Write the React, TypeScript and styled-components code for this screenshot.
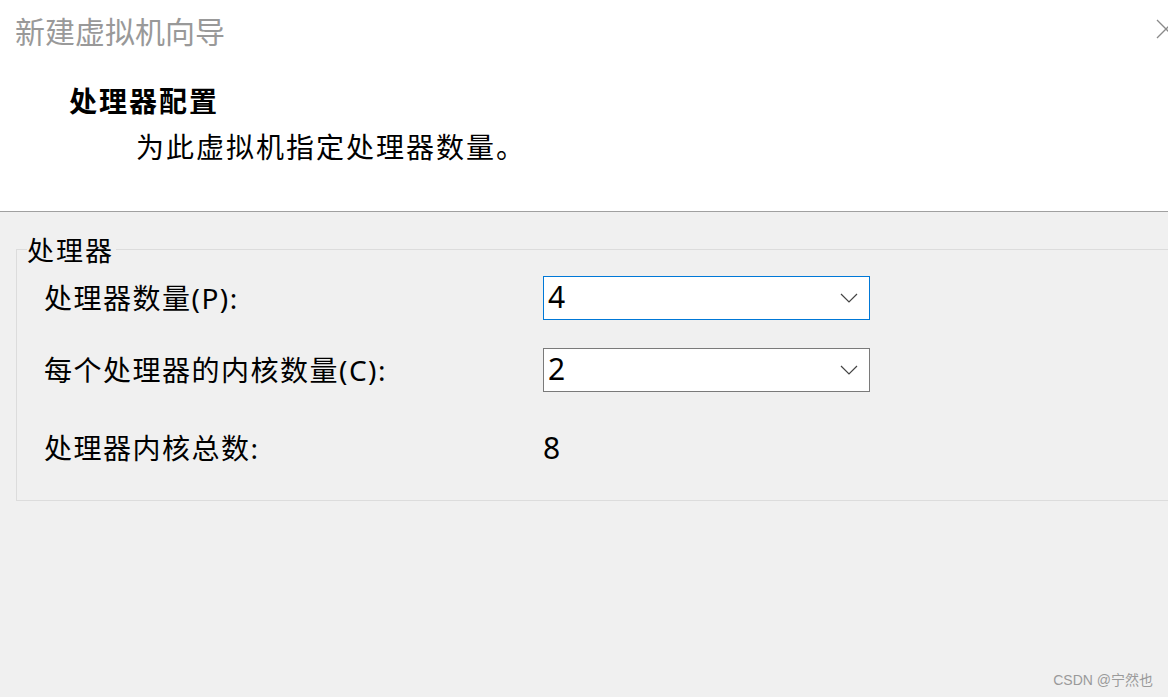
import styled, { createGlobalStyle } from 'styled-components';

const GlobalStyle = createGlobalStyle`
  html, body {
    margin: 0;
    padding: 0;
    background: #f0f0f0;
    overflow: hidden;
  }
  body {
    font-family: "Noto Sans", "Noto Sans CJK SC", sans-serif;
  }
`;

const Window = styled.div`
  width: 1168px;
  height: 697px;
  display: flex;
  flex-direction: column;
  background: #f0f0f0;
  overflow: hidden;
  position: relative;
`;

const Header = styled.div`
  height: 212px;
  box-sizing: border-box;
  background: #ffffff;
  border-bottom: 1px solid #a0a0a0;
  display: flex;
  flex-direction: column;
`;

const TitleBar = styled.div`
  display: flex;
  justify-content: space-between;
  align-items: center;
  height: 60px;
  padding-left: 15px;
`;

const Title = styled.div`
  font-family: "Noto Sans CJK SC", sans-serif;
  font-size: 30px;
  color: #999999;
  line-height: 1;
  margin-top: -1px;
`;

const CloseIcon = styled.svg`
  width: 20px;
  height: 20px;
  margin-right: -8px;
  margin-top: -2px;
`;

const Heading = styled.div`
  font-family: "Noto Sans CJK SC", sans-serif;
  font-size: 28px;
  letter-spacing: 2px;
  font-weight: 700;
  color: #000;
  margin: 26px 0 0 69px;
  line-height: 1;
`;

const Subheading = styled.div`
  font-family: "Noto Sans CJK SC", sans-serif;
  font-size: 28px;
  letter-spacing: 2px;
  color: #000;
  margin: 18px 0 0 136px;
  line-height: 1;
`;

const Body = styled.div`
  padding: 24px 0 0 16px;
`;

const Group = styled.fieldset`
  margin: 0;
  width: 1200px;
  box-sizing: border-box;
  border: 1px solid #dcdcdc;
  padding: 13px 0 37px 27px;
  min-width: 0;
`;

const Legend = styled.legend`
  font-family: "Noto Sans CJK SC", sans-serif;
  font-size: 27px;
  letter-spacing: 2px;
  color: #000;
  padding: 0 2px 0 0;
  margin-left: -17px;
  line-height: 1;
`;

const Rows = styled.div`
  display: grid;
  grid-template-columns: 499px 327px;
  row-gap: 28px;
  align-items: center;
`;

const Label = styled.div<{ $offset?: number }>`
  font-family: "Noto Sans", "Noto Sans CJK SC", sans-serif;
  font-size: 28px;
  letter-spacing: 1.5px;
  color: #000;
  line-height: 1;
  margin-top: ${(p) => p.$offset ?? 0}px;
`;

const SelectBox = styled.div<{ $focused?: boolean }>`
  height: 44px;
  box-sizing: border-box;
  background: #fff;
  border: 1px solid ${(p) => (p.$focused ? '#0078d7' : '#7a7a7a')};
  display: flex;
  align-items: center;
  justify-content: space-between;
  padding: 0 11px 0 4px;
`;

const Value = styled.span<{ $offset?: number }>`
  font-family: "Noto Sans", sans-serif;
  font-size: 30px;
  color: #000;
  line-height: 1;
  margin-top: ${(p) => p.$offset ?? -2}px;
`;

const Chevron = styled.svg`
  width: 18px;
  height: 10px;
`;

const Watermark = styled.div`
  position: absolute;
  right: 15px;
  bottom: 8px;
  font-family: "Liberation Sans", "Noto Sans CJK SC", sans-serif;
  font-size: 14px;
  color: #9a9a9a;
`;

const Select = ({ value, focused }: { value: string; focused?: boolean }) => (
  <SelectBox $focused={focused}>
    <Value>{value}</Value>
    <Chevron viewBox="0 0 18 10">
      <polyline points="1,1 9,9 17,1" fill="none" stroke="#444" strokeWidth="1.2" />
    </Chevron>
  </SelectBox>
);

export default function App() {
  return (
    <>
      <GlobalStyle />
      <Window>
        <Header>
          <TitleBar>
            <Title>新建虚拟机向导</Title>
            <CloseIcon viewBox="0 0 20 20">
              <path d="M1 1 L19 19 M19 1 L1 19" stroke="#8a8a8a" strokeWidth="1.3" fill="none" />
            </CloseIcon>
          </TitleBar>
          <Heading>处理器配置</Heading>
          <Subheading>为此虚拟机指定处理器数量。</Subheading>
        </Header>
        <Body>
          <Group>
            <Legend>处理器</Legend>
            <Rows>
              <Label>处理器数量(P):</Label>
              <Select value="4" focused />
              <Label>每个处理器的内核数量(C):</Label>
              <Select value="2" />
              <Label $offset={13}>处理器内核总数:</Label>
              <Value $offset={13}>8</Value>
            </Rows>
          </Group>
        </Body>
        <Watermark>CSDN @宁然也</Watermark>
      </Window>
    </>
  );
}
